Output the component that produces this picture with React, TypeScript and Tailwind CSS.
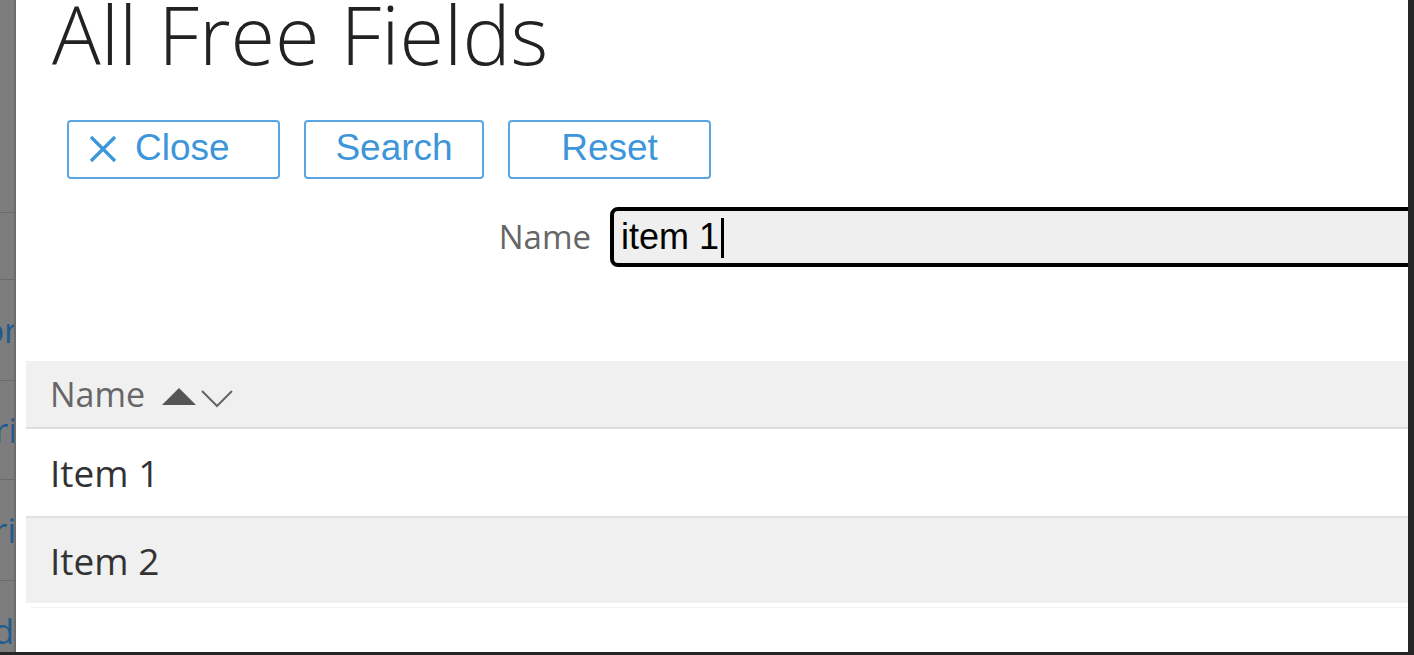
import { useState } from 'react';

const sans = { fontFamily: '"Open Sans", "Noto Sans", sans-serif' };
const arial = { fontFamily: '"Liberation Sans", Arial, sans-serif' };

function BackdropStrip() {
  // page behind the modal, dimmed by the overlay
  return (
    <div className="w-[16px] shrink-0 h-full bg-[#7d7d7d] border-r-2 border-[#6c6c6c] overflow-hidden flex flex-col" style={sans}>
      <div className="h-[213px] border-b border-[#6a6a6a]" />
      <div className="h-[67px] border-b border-[#6a6a6a]" />
      <div className="h-[101px] border-b border-[#6a6a6a] flex items-center justify-end">
        <span className="text-[34px] leading-none text-[#1f5b8f] -mr-[4px]">or</span>
      </div>
      <div className="h-[99px] border-b border-[#6a6a6a] flex items-center justify-end">
        <span className="text-[34px] leading-none text-[#1f5b8f] -mr-[3px]">ri</span>
      </div>
      <div className="h-[101px] border-b border-[#6a6a6a] flex items-center justify-end">
        <span className="text-[34px] leading-none text-[#1f5b8f] -mr-[2px]">ri</span>
      </div>
      <div className="flex-1 flex items-end justify-end">
        <span className="text-[34px] leading-none text-[#1f5b8f] mb-[4px]">d</span>
      </div>
    </div>
  );
}

function ActionButton({ children, className }: { children: React.ReactNode; className: string }) {
  return (
    <button
      className={`h-[59px] border-2 border-[#5aa6e2] rounded-[4px] bg-white text-[#3d95da] text-[37px] leading-none flex items-center pb-[5px] ${className}`}
      style={arial}
    >
      {children}
    </button>
  );
}

export default function App() {
  const [name, setName] = useState('item 1');

  return (
    <div className="w-[1414px] h-[655px] bg-[#262626] flex flex-col overflow-hidden">
      <div className="h-[652px] flex">
        <BackdropStrip />
        <div className="flex-1 bg-white overflow-hidden">
          <h1 className="text-[81px] leading-[80px] font-light text-[#222] pl-[36px] -mt-[6px] whitespace-nowrap" style={sans}>
            All Free Fields
          </h1>

          <div className="flex gap-[24px] pl-[51px] mt-[46px]">
            <ActionButton className="w-[213px] pl-[20px]">
              <svg width="28" height="28" viewBox="0 0 28 28" className="mr-[18px] mt-[4px]">
                <path d="M2 2 L26 26 M26 2 L2 26" stroke="#3d95da" strokeWidth="3.2" />
              </svg>
              Close
            </ActionButton>
            <ActionButton className="w-[180px] justify-center">Search</ActionButton>
            <ActionButton className="w-[203px] justify-center">Reset</ActionButton>
          </div>

          <div className="flex items-center mt-[28px]">
            <label className="w-[575px] shrink-0 text-right text-[33px] text-[#666] leading-none mt-[-2px]" style={sans}>
              Name
            </label>
            <div className="relative ml-[19px] w-[840px] h-[60px] shrink-0 border-[4px] border-black rounded-[8px] bg-[#efefef] flex items-center pl-[7px]">
              <input
                value={name}
                onChange={(e) => setName(e.target.value)}
                className="w-full bg-transparent outline-none text-[36px] text-black leading-none caret-transparent"
                style={arial}
              />
              {/* text cursor as captured */}
              <span className="absolute left-[107px] top-[7px] w-[3px] h-[40px] bg-black" />
            </div>
          </div>

          <div className="mt-[94px] ml-[10px]" style={sans}>
            <div className="h-[68px] bg-[#f0f0f0] border-b-2 border-[#dedede] flex items-center pl-[24px] text-[#666] text-[34px]">
              <span className="leading-none">Name</span>
              <svg width="76" height="24" viewBox="0 0 76 24" className="ml-[15px] mt-[6px]">
                <path d="M2 20 L19 3 L36 20 Z" fill="#555" />
                <path d="M42 6 L57 21 L72 6" fill="none" stroke="#666" strokeWidth="2" />
              </svg>
            </div>
            <div className="h-[89px] bg-white border-b-2 border-[#e2e2e2] flex items-center pl-[24px] text-[#333] text-[37px]">
              <span className="leading-none">Item 1</span>
            </div>
            <div className="h-[85px] bg-[#f0f0f0] flex items-center pl-[24px] text-[#333] text-[37px]">
              <span className="leading-none">Item 2</span>
            </div>
            <div className="h-[5px] ml-[5px] border-b border-[#f2f2f2]" />
          </div>
        </div>
        <div className="w-[6px] shrink-0" />
      </div>
    </div>
  );
}
